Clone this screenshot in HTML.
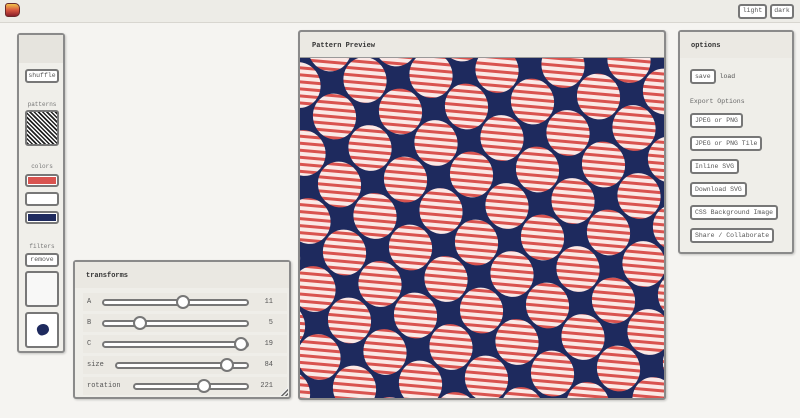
<!DOCTYPE html>
<html><head><meta charset="utf-8"><style>
*{box-sizing:border-box;margin:0;padding:0}
html,body{width:800px;height:418px;overflow:hidden}
body{background:#f5f4f1;font-family:"Liberation Mono",monospace;font-size:7px;color:#444;position:relative}
.top{position:absolute;left:0;top:0;width:800px;height:23px;background:#edece7;border-bottom:1px solid #d8d6d0}
.logo{position:absolute;left:5px;top:3px;width:15px;height:14px;border-radius:3px 5px 5px 3px;background:linear-gradient(#f1c24a,#d9573f 50%,#8a1f2a);border:1px solid #6a2a2a}
.btn{position:absolute;border:2px solid #777;border-radius:3px;background:#fff;font-size:6.5px;color:#555;text-align:center;line-height:10px}
.panel{position:absolute;border:2px solid #8a8a8a;border-radius:3px;background:#efeee9;box-shadow:1px 1px 2px rgba(0,0,0,.2)}
.lbl{position:absolute;font-size:6px;color:#777;text-align:center;width:46px;left:0}
.sw{position:absolute;left:6px;width:34px;border:2px solid #777;border-radius:3px;background:#fff}
.track{position:absolute;height:7px;border:2px solid #777;border-radius:4px;background:#fff}
.thumb{position:absolute;width:14px;height:14px;border:2px solid #777;border-radius:50%;background:#fff}
.row{position:absolute;left:8px;width:204px;height:18px;background:#ebe9e3}
.rl{position:absolute;font-size:7px;color:#555}
.rv{position:absolute;right:14px;font-size:7px;color:#555}
.ob{position:relative;display:inline-block;border:2px solid #777;border-radius:3px;background:#fff;font-size:6.5px;color:#555;padding:0 3px;line-height:11px;margin-left:10px;margin-bottom:8px}
</style></head><body>
<div class="top"><div class="logo"></div>
<div class="btn" style="left:738px;top:4px;width:29px;height:15px">light</div>
<div class="btn" style="left:770px;top:4px;width:24px;height:15px">dark</div>
</div>

<div class="panel" style="left:17px;top:33px;width:48px;height:320px;background:#f0efea">
 <div style="position:absolute;left:0;top:0;width:44px;height:28px;background:#e6e4de"></div>
 <div class="btn" style="left:6px;top:34px;width:34px;height:14px">shuffle</div>
 <div class="lbl" style="top:66px">patterns</div>
 <div class="sw" style="top:75px;height:36px;background:repeating-linear-gradient(45deg,#222 0 1.5px,#fff 1.5px 3px)"></div>
 <div class="lbl" style="top:128px">colors</div>
 <div class="sw" style="top:139px;height:13px;background:#fff;padding:1px"><div style="width:100%;height:100%;background:#d9534f"></div></div>
 <div class="sw" style="top:157px;height:14px"></div>
 <div class="sw" style="top:176px;height:13px;padding:1px"><div style="width:100%;height:100%;background:#1e2a5e"></div></div>
 <div class="lbl" style="top:208px">filters</div>
 <div class="btn" style="left:6px;top:218px;width:34px;height:14px">remove</div>
 <div class="sw" style="top:236px;height:36px;background:#f8f8f7"></div>
 <div class="sw" style="top:277px;height:36px"><div style="position:absolute;left:10px;top:10px;width:12px;height:11px;border-radius:45% 55% 50% 40%;background:#1e2a5e;transform:rotate(-20deg)"></div></div>
</div>

<div class="panel" style="left:73px;top:260px;width:218px;height:139px">
 <div style="position:absolute;left:0;top:0;width:214px;height:26px;background:#eae8e2"></div>
 <div style="position:absolute;left:11px;top:10px;font-weight:bold;color:#333">transforms</div>
 <div class="row" style="top:31px"><span class="rl" style="left:4px;top:5px">A</span><div class="track" style="left:19px;top:6px;width:147px"></div><div class="thumb" style="left:93px;top:2px"></div><span class="rv" style="top:5px">11</span></div>
 <div class="row" style="top:52px"><span class="rl" style="left:4px;top:5px">B</span><div class="track" style="left:19px;top:6px;width:147px"></div><div class="thumb" style="left:50px;top:2px"></div><span class="rv" style="top:5px">5</span></div>
 <div class="row" style="top:73px"><span class="rl" style="left:4px;top:5px">C</span><div class="track" style="left:19px;top:6px;width:147px"></div><div class="thumb" style="left:151px;top:2px"></div><span class="rv" style="top:5px">19</span></div>
 <div class="row" style="top:94px"><span class="rl" style="left:4px;top:5px">size</span><div class="track" style="left:32px;top:6px;width:134px"></div><div class="thumb" style="left:137px;top:2px"></div><span class="rv" style="top:5px">84</span></div>
 <div class="row" style="top:115px"><span class="rl" style="left:4px;top:5px">rotation</span><div class="track" style="left:50px;top:6px;width:116px"></div><div class="thumb" style="left:114px;top:2px"></div><span class="rv" style="top:5px">221</span></div>
 <div style="position:absolute;right:1px;bottom:1px;width:9px;height:9px;background:repeating-linear-gradient(135deg,#eee 0 1.5px,#666 1.5px 3px);clip-path:polygon(100% 0,100% 100%,0 100%)"></div>
</div>

<div class="panel" style="left:298px;top:30px;width:368px;height:370px;background:#1e2a5e;overflow:hidden">
 <div style="position:absolute;left:0;top:0;width:364px;height:26px;background:#ebe9e3;border-bottom:1px solid #999"></div>
 <div style="position:absolute;left:12px;top:10px;font-weight:bold;color:#333">Pattern Preview</div>
 <svg id="pat" width="364" height="340" style="position:absolute;left:0;top:26px" xmlns="http://www.w3.org/2000/svg">
  <defs><pattern id="st" width="7" height="7" patternUnits="userSpaceOnUse" patternTransform="rotate(20)"><rect width="7" height="7" fill="#fbe9e6"/><rect width="7" height="3" fill="#d9534f"/></pattern></defs>
  <rect width="364" height="340" fill="#1e2a5e"/>
  <g id="g" fill="url(#st)"></g>
 </svg>
</div>

<div class="panel" style="left:678px;top:30px;width:116px;height:224px">
 <div style="position:absolute;left:0;top:0;width:112px;height:26px;background:#ebe9e3"></div>
 <div style="position:absolute;left:11px;top:10px;font-weight:bold;color:#333">options</div>
 <div style="position:absolute;left:0;top:37px;width:112px">
  <span class="ob">save</span><span style="margin-left:4px;font-size:6.5px;color:#555">load</span>
  <div style="margin:6px 0 8px 10px;font-size:6.5px;color:#666">Export Options</div>
  <span class="ob">JPEG or PNG</span><br>
  <span class="ob">JPEG or PNG Tile</span><br>
  <span class="ob">Inline SVG</span><br>
  <span class="ob">Download SVG</span><br>
  <span class="ob">CSS Background Image</span><br>
  <span class="ob">Share / Collaborate</span>
 </div>
</div>
<script>
var g=document.getElementById('g'),s='';
for(var i=-6;i<14;i++)for(var j=-4;j<16;j++){var x=65+66*i-30.5*j,y=22-5*i+36.5*j;
if(x>-30&&x<400&&y>-30&&y<370)s+='<ellipse cx="'+x+'" cy="'+y+'" rx="21.5" ry="23" transform="rotate(-15 '+x+' '+y+')"/>';}
g.innerHTML=s;
</script>
</body></html>
